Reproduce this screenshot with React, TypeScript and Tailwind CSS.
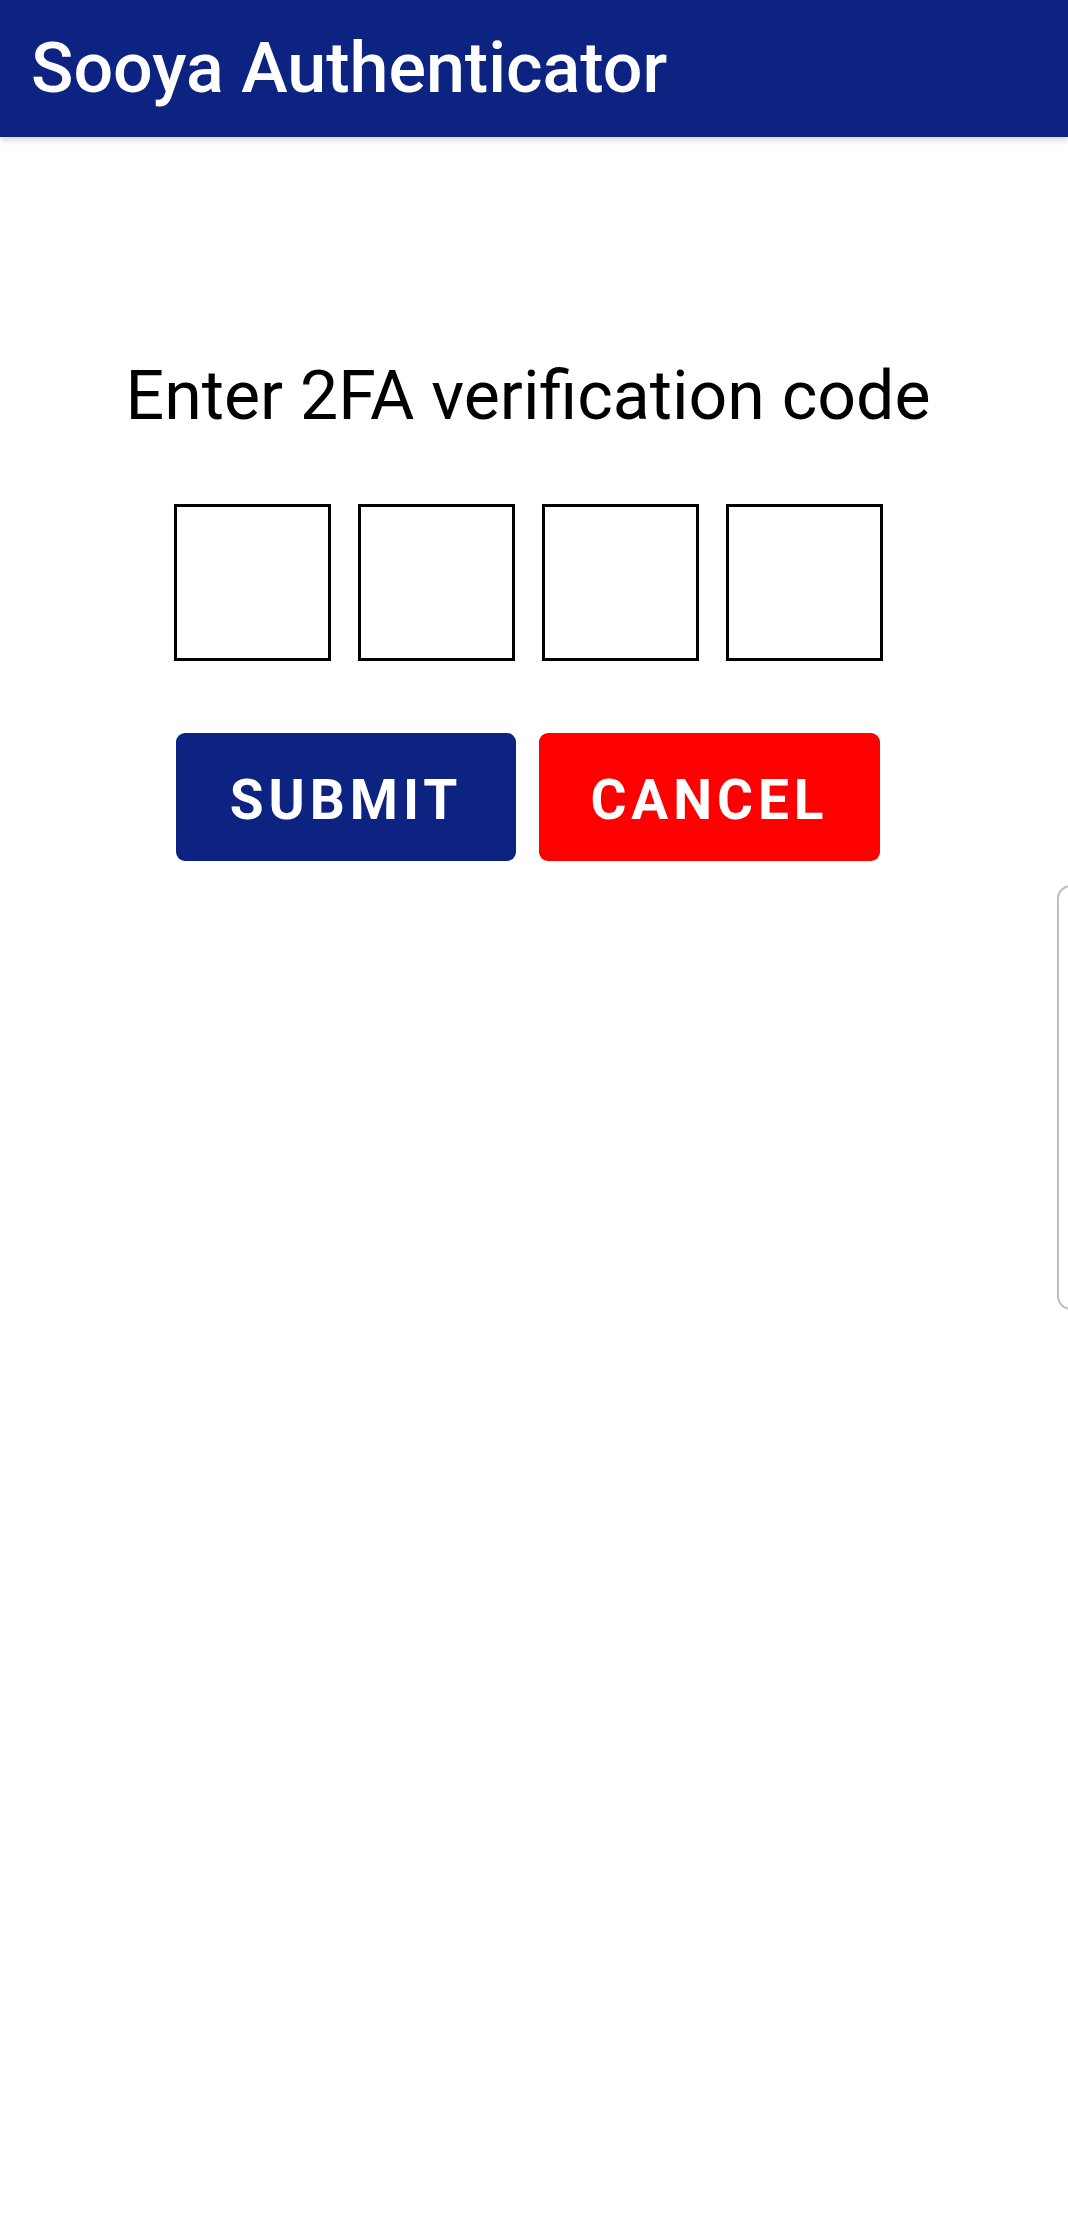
import React from "react";

export default function App() {
  return (
    <div className="relative w-[1068px] h-[2220px] bg-white overflow-hidden" style={{ fontFamily: "Roboto, 'Noto Sans', sans-serif" }}>
      <header className="h-[137px] bg-[#0d2382] flex items-center pl-[31px] shadow-[0_3px_6px_rgba(0,0,0,0.18)] relative z-10">
        <h1 className="text-white text-[70px] font-medium leading-none tracking-[0px] mt-[-1px]">Sooya Authenticator</h1>
      </header>
      <main className="w-[1056px] flex flex-col items-center">
        <p className="mt-[220px] text-black text-[68px] leading-[78px]">Enter 2FA verification code</p>
        <div className="mt-[69px] flex gap-[27px]">
          <div className="w-[157px] h-[157px] border-[3px] border-black" />
          <div className="w-[157px] h-[157px] border-[3px] border-black" />
          <div className="w-[157px] h-[157px] border-[3px] border-black" />
          <div className="w-[157px] h-[157px] border-[3px] border-black" />
        </div>
        <div className="mt-[72px] flex gap-[23px]">
          <button className="w-[340px] h-[128px] pt-[6px] rounded-[9px] bg-[#0d2382] text-white text-[55px] font-bold tracking-[0.09em] flex items-center justify-center">SUBMIT</button>
          <button className="w-[341px] h-[128px] pt-[6px] rounded-[9px] bg-[#ff0000] text-white text-[55px] font-bold tracking-[0.09em] flex items-center justify-center">CANCEL</button>
        </div>
      </main>
      <div className="absolute left-[1057px] top-[885px] w-[24px] h-[425px] border-2 border-[#bdbdbd] rounded-l-[14px] bg-white" />
    </div>
  );
}
